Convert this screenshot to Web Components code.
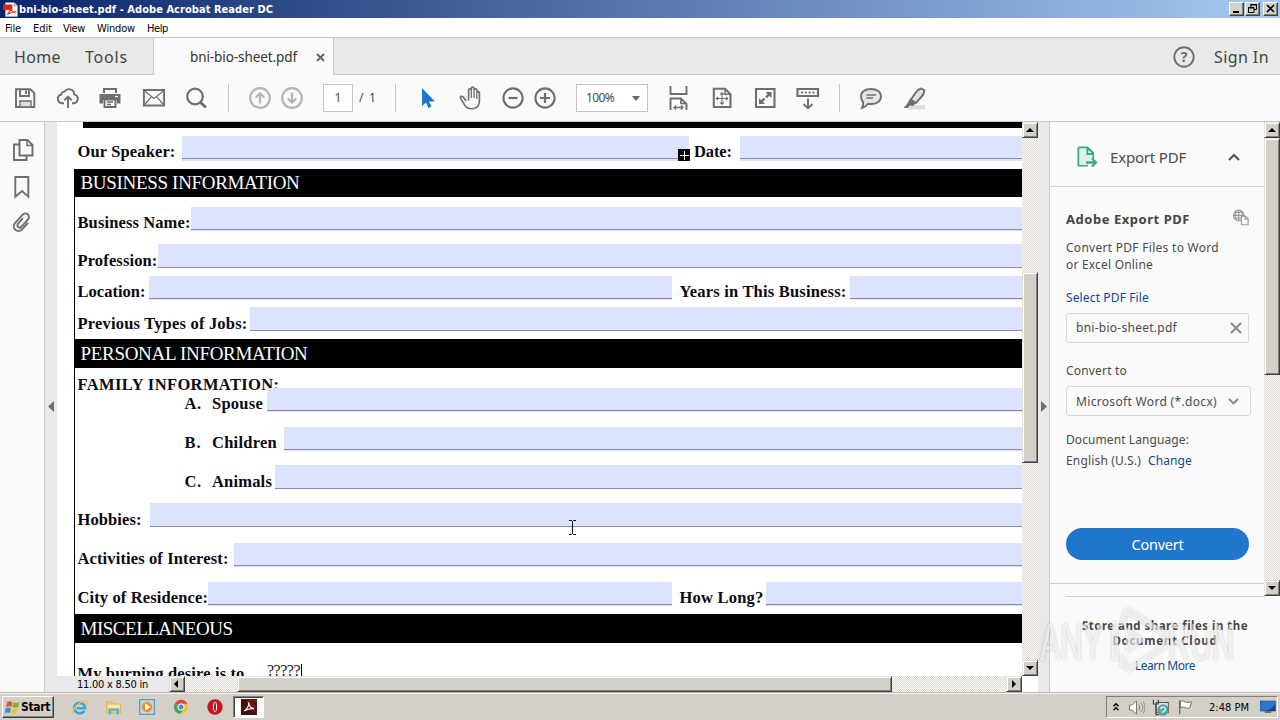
<!DOCTYPE html>
<html lang="en">
<head>
<meta charset="utf-8">
<title>bni-bio-sheet.pdf - Adobe Acrobat Reader DC</title>
<style>
html,body{margin:0;height:100%;overflow:hidden;background:#fafafa;font-family:"Noto Sans","Open Sans",sans-serif}
</style>
</head>
<body>
<reader-window></reader-window>
<script>
const define = (name, markup, setup) => customElements.define(name, class extends HTMLElement {
  connectedCallback() {
    if (this.shadowRoot) return;
    const root = this.attachShadow({ mode: 'open' });
    root.innerHTML = typeof markup === 'function' ? markup(this) : markup;
    if (setup) setup(this, root);
  }
});

/* A single line of text; "w" is the width that the line is tracked to. */
define('ui-text', `<style>:host{display:block;flex:none;white-space:nowrap;line-height:18px}span{display:inline-block}</style><span><slot></slot></span>`,
  (el, root) => {
    const w = +el.getAttribute('w');
    if (!w) return;
    const span = root.querySelector('span');
    const n = el.textContent.length;
    span.style.letterSpacing = ((w - span.getBoundingClientRect().width) / n).toFixed(3) + 'px';
    el.style.width = w + 'px';
  });

const page = '<path d="M4 2.9h10l6 6V21H4z"/><path d="M14 3v6h6"/>';
const ICONS = {
  save: '<path d="M3 3.200h14.300l4 4V21H3z"/><path d="M7 3.500V10h9V3.500"/><path d="M13 4.500v3.500" /><path d="M7 21v-6h11v6z" fill="#ddd" stroke-width="1.400"/>',
  cloud: '<path d="M8 17.200H6a4.400 4.400 0 0 1-.6-8.700 3 3 0 0 1 3.200-2.900 5.200 5.200 0 0 1 9.600 2.800 4.500 4.500 0 0 1 0 8.800H16"/><path d="M12 22V11M8.300 14.400 12 10.700l3.700 3.700"/>',
  print: '<path d="M6 7V3h12v4" stroke-width="2"/><path d="M1.500 8h21v9.500H19V14H5v3.500H1.500z" fill="currentColor" stroke="none"/><path d="M6.500 13.500h11V21h-11z" fill="#fafafa"/><path d="M9 16h6M9 18.500h4" stroke-width="1.300"/><path d="M17 10.500h3" stroke="#fafafa" stroke-width="1.200"/>',
  mail: '<path d="M1.900 4h20.200v15.500H1.900z"/><path d="m2 4.500 10 8 10-8M2 19l7.500-8.300M22 19l-7.500-8.300" stroke-width="1.200"/>',
  search: '<circle cx="11" cy="10.500" r="7.800" stroke-width="2.200"/><path d="m16.500 16.500 5.500 5" stroke-width="3"/>',
  up: '<circle cx="12" cy="12" r="9.800" stroke-width="2.200"/><path d="M12 17.500V7.500M7.800 11.500 12 7.300l4.200 4.200" stroke-width="2.200"/>',
  down: '<circle cx="12" cy="12" r="9.800" stroke-width="2.200"/><path d="M12 6.500v10M7.800 12.500l4.200 4.200 4.200-4.200" stroke-width="2.200"/>',
  arrow: '<path d="M7 2v18l4-3.500 2.500 5.500 3-1.500-2.500-5h6z" fill="#2076cc" stroke="none"/>',
  hand: '<path d="M8 15 4.800 11.300c-1.800-1.800-3.700-.300-2.600 1.400l4.600 7.500c1.500 2.700 3.700 3.300 7 3.300 5 0 8-2.500 8-8.500V7.200c0-2-2.600-2-2.600 0V4.300c0-2-2.900-2-2.900 0V2.500c0-2-2.900-2-2.900 0v1.600c0-2-2.900-2-2.900 0V15" stroke-width="1.700" transform="translate(.5 .2) scale(.96)"/><path d="M13.300 4v8M16 4v8M18.800 7v6" stroke-width="1.300"/>',
  minus: '<circle cx="12" cy="12" r="9.600" stroke-width="2.100"/><path d="M7.500 12h9" stroke-width="2.200"/>',
  plus: '<circle cx="12" cy="12" r="9.600" stroke-width="2.100"/><path d="M7 12h10M12 7v10" stroke-width="2.200"/>',
  fitwidth: '<path d="M4.500 0v8h16V0M4.500 24V12.500h10.500l5.500 5.500v6"/><path d="M15 12v5.500h5" stroke-width="1.700"/><path d="M8 21.500h9M10 19.500l-2 2 2 2M15 19.500l2 2-2 2" stroke-width="1.300"/>',
  fitpage: '<path d="M3.800 2.800H15l5.500 5.500V21H3.800z" stroke-width="2.100"/><path d="M15 3v5.300h5.200" stroke-width="1.500"/><path d="M12 7v11M6.500 12.500h11M10.300 8.500 12 6.800l1.700 1.700M10.300 16.500l1.700 1.700 1.700-1.700M8 10.800l-1.700 1.700L8 14.200M16 10.800l1.700 1.700-1.700 1.700" stroke-width="1.100"/>',
  full: '<path d="M3 3h18.500v18H3z" stroke-width="2.100"/><path d="M12.500 6h6v6zM6 12v6h6z" fill="currentColor" stroke="none"/><path d="m17 7.500-4 4M7.500 16.500l4-4" stroke-width="2.400"/>',
  keys: '<path d="M1.500 3h20.500v7H1.500z" stroke-width="2.200"/><path d="M5 6.500h14" stroke-dasharray="2 1.800" stroke-width="2"/><path d="M12 12.500V22M7.500 18l4.500 4.300 4.500-4.300"/>',
  comment: '<path d="M12 3c6 0 10 3 10 7.500S18 18 12 18c-1 0-2-.100-3-.300-1.500 2-3.500 3.800-6 4.300 1-2 1.500-3.500 1.200-5.800C2.500 14.800 2 12.800 2 10.500 2 6 6 3 12 3z" fill="#e6e6e6"/><path d="M7.500 9h9.500M7.500 12h6.500" stroke-width="1.300"/>',
  pen: '<path d="M10 19h13v4.500H5z" fill="#ddd" stroke="none"/><path d="M19 2.500 22.300 4c0 3-1 5-3 7l-5.500 6-5-3.500 5-7c1.500-2 3-3.300 5.200-4z" fill="#e3e3e3" stroke-width="1.900"/><path d="m7.500 13.500 6 4-2.500 2.500-3-.500-2 2.500H1.500l3.500-4z" fill="currentColor" stroke="none"/>',
  pages: '<path d="M8.500 2h8l5 5v10.500h-13z"/><path d="M16 2v5.500h5.500" stroke-width="1.500"/><path d="M8.500 6.500H3V22h12.500v-4"/>',
  bookmark: '<path d="M5.300 2h13v19.700L12 16l-6.700 5.700z"/>',
  clip: '<g transform="rotate(42 12 12)"><path d="M16.500 8v9a4.500 4.500 0 0 1-9.500 0V5.500a3.600 3.600 0 0 1 7.200 0V16a2.300 2.300 0 0 1-4.500 0V8" stroke-width="1.900" transform="translate(.5 .5)"/></g>',
  help: '<circle cx="12" cy="12" r="9.700"/>',
  exportpdf: '<g stroke="#3faa87" stroke-width="2.100" transform="translate(1 0)"><path d="M3.500 2.500h9L18 8v6M3.500 2.500v18H13" fill="none"/><path d="M4.500 3.500h8V9h5v5l-5 6h-8z" fill="#dcf1e8" stroke="none"/><path d="M12.500 3v6H18"/><path d="M11 17.500h9M17 13.500l4 4-4 4" stroke-width="2.300"/></g>',
  globe: '<g stroke="#999" stroke-width="1.500"><circle cx="9" cy="8.500" r="7"/><path d="M2 8.500h14M9 2v14M4 4.500h10M4 12h8M6 2.500c-2.500 4-2.500 8 0 12M12 2.500c2 3 2.500 5 2 8"/><path d="M12.500 9.500h5.500l3.500 3.500v8h-9z" fill="#fafafa"/><path d="M17.500 10v3.500H21"/></g>',
  acrobatdoc: '<path d="M4 1h14l5 5v17H4z" fill="#fff" stroke="#bbb" stroke-width="1"/><path d="M0 4h15v9H0z" fill="#d82a1e" stroke="none"/><path d="M18 1v5h5" stroke="#999" fill="#eee"/><path d="M7 20c4-4 5-8 5-10 1 5 5 7 9 6-5-.500-9 1-14 4z" stroke="#d93b2b"/>',
  ie: '<path d="M4 14a8 8 0 1 1 16-1H8M19 17a8 8 0 0 1-14-2" stroke="#38a5dc" stroke-width="3.600"/><path d="M3 21C-1 17 12 2 21 3c2.500.500 1 4 0 5" stroke="#e8c547" stroke-width="1.800"/>',
  folder: '<path d="M2 4h8l2 3h10v13H2z" fill="#e9ca62" stroke="#d5b24a" stroke-width="1"/><path d="M4 8h17v5H4z" fill="#f7e8a5" stroke="none"/><path d="M7 22v-7h11v7" stroke="#5cb3dc" stroke-width="3.500"/>',
  media: '<rect x="1" y="1" width="22" height="22" fill="#bcdcf0" stroke="#5197c5" stroke-width="1.800"/><circle cx="12" cy="12" r="8" fill="#f28c1d" stroke="#f7b35c" stroke-width="1"/><path d="m9 6.500 8.500 5.500L9 17.500z" fill="#fff" stroke="none"/>',
  chrome: '<circle cx="12" cy="12" r="10.500" fill="#f2c52d" stroke="none"/><path d="M12 12 3 6.500A10.500 10.500 0 0 1 21.500 7H12z" fill="#d94b3d" stroke="none"/><path d="M12 12 3 6.500A10.500 10.500 0 0 0 11 22.500l5-8z" fill="#43a45a" stroke="none"/><circle cx="12" cy="12" r="4.700" fill="#4c8edb" stroke="#fff" stroke-width="1.500"/>',
  opera: '<circle cx="12" cy="12" r="11.500" fill="#c5151e" stroke="none"/><ellipse cx="12" cy="12" rx="3.800" ry="8.500" fill="#f2f2f2" stroke="#8d0c12" stroke-width="1"/><ellipse cx="12" cy="12" rx="1.500" ry="7" fill="#a91820" stroke="none"/>',
  acrobat: '<rect width="24" height="24" fill="#4a0d0c" stroke="none"/><path d="M4 0h20v24z" fill="#7a1815" stroke="none" opacity=".6"/><path d="M5 18c4-3 7-8 6.500-13 .500 5 3 9 8 9.500-5-.500-10 .500-14.500 3.500z" stroke="#fff" stroke-width="1.800"/>',
  flagwin: '<path d="M3 5c3-2 5-2 8-.500L9.500 12C7 10.500 4.500 11 1.500 12z" fill="#e5542a" stroke="none"/><path d="M12.500 5c3 1.500 5 1.500 9 0L20 12c-3 1.500-6 1.500-9 .500z" fill="#77b52d" stroke="none"/><path d="M1 14c3-1.500 5.500-1.500 8-.200L7.500 21c-3-1.500-5-1-8 .200z" fill="#3d8bd4" stroke="none"/><path d="M10.500 14.300c3 1.300 6 1 9 0L18 21.500c-3 1.500-6 1.300-9 .200z" fill="#f6c427" stroke="none"/>',
  chevrons: '<path d="m6 10 6-6 6 6M6 20l6-6 6 6" stroke="#000" stroke-width="3.500"/>',
  speaker: '<path d="M2 8.500h4l6-6v19l-6-6H2z" fill="#fff" stroke="#777" stroke-width="1.400"/><path d="M15 8c2 2 2 6 0 8M18 5.500c4 4 4 9 0 13M21 3.500c4 5 4 12 0 17" stroke="#888" stroke-width="1.400"/>',
  network: '<path d="M6 5h17v14H6z" fill="#d8eaf0" stroke="#555" stroke-width="1.500"/><path d="M2 1v6h7V1M5.500 7v15H10" stroke="#444" stroke-width="1.600"/><circle cx="15.500" cy="15.500" r="7" fill="#47b5ae" stroke="#6c8d91"/><path d="M12 14c2-4 7-3 7 0s-5 5-5 5" stroke="#d5f1e8"/>',
  flag: '<path d="M4 2v21" stroke="#666" stroke-width="2"/><path d="M5 3.500c5-2 6 1 9 1.500l8-.500-3 9c-4 1-7-.500-9-1.500L5 13z" fill="#fff" stroke="#666" stroke-width="1.400"/>',
  monitor: '<path d="M0 3h23v15H0z" fill="#2e78d2" stroke="#254a7c" stroke-width="1"/><path d="M23 8v10H5C14 17 19 13 23 8z" fill="#153e94" stroke="none"/><path d="M7 18v3h10v-3" fill="#777" stroke="none"/>'
};
define('ui-icon', el => {
  const s = el.getAttribute('size') || 24;
  return `<style>:host{display:block;flex:none;width:${s}px;height:${s}px;color:#6e6e6e}svg{display:block}</style>
  <svg width="${s}" height="${s}" viewBox="0 0 24 24" fill="none" stroke="currentColor" stroke-width="1.900">${ICONS[el.getAttribute('name')] || page}</svg>`;
});

/* Classic raised scrollbar: "before" and "thumb" are lengths along its axis. */
define('win-scroll', el => {
  const v = !el.hasAttribute('horizontal');
  const a = el.getAttribute('before'), t = el.getAttribute('thumb');
  const tri = d => `<svg width="8" height="8" viewBox="0 0 8 8"><path d="${d}"/></svg>`;
  return `<style>
  :host{display:flex;flex-direction:${v ? 'column' : 'row'};flex:none;${v ? 'width' : 'height'}:16px;
    background:repeating-conic-gradient(#fbfaf9 0 25%,#dedbd5 0 50%) 0 0/2px 2px}
  .b,.t{box-sizing:border-box;background:#d4d0c8;border:1px solid;border-color:#e4e1dc #404040 #404040 #e4e1dc;box-shadow:inset 1px 1px #fff,inset -1px -1px #808080;flex:none}
  .b{width:16px;height:16px;display:grid;place-items:center}
  .t{${v ? `height:${t}px;margin-top:${a}px` : `width:${t}px;margin-left:${a}px`}}
  .g{flex:1}
  </style><div class="b">${tri(v ? 'M0 6 4 2l4 4z' : 'M5 0v8L1 4z')}</div><div class="t"></div><div class="g"></div><div class="b">${tri(v ? 'M0 2h8L4 6z' : 'M2 0v8l4-4z')}</div>`;
});

define('title-bar', `<style>
:host{display:flex;align-items:center;height:18px;flex:none;background:linear-gradient(90deg,#0a246a,#a6caf0);color:#fff;box-sizing:border-box;padding:0 2px 0 3px}
ui-text{font:bold 11px/18px "DejaVu Sans Condensed","DejaVu Sans",sans-serif;font-stretch:condensed;margin:1px 0 0 1px}
.s{flex:1}
.b{width:15px;height:14px;box-sizing:border-box;background:#d4d0c8;border:1px solid;border-color:#fff #404040 #404040 #fff;box-shadow:inset -1px -1px #808080}
.b+.b{margin-left:1px}.b.x{margin-left:3px}svg{display:block}
</style><ui-icon name="acrobatdoc" size="15"></ui-icon><ui-text w="254">bni-bio-sheet.pdf - Adobe Acrobat Reader DC</ui-text><div class="s"></div>
<div class="b"><svg width="13" height="12"><path d="M3 8h6v2H3z"/></svg></div>
<div class="b"><svg width="13" height="12" fill="none" stroke="#000"><path d="M5 4V1.500h5.500v5H8M4 2h7M2.500 4.500H8v5H2.500zM2 5h6"/></svg></div>
<div class="b x"><svg width="13" height="12" stroke="#000" stroke-width="1.700"><path d="m3 2 7 7M10 2 3 9"/></svg></div>`);

define('menu-bar', `<style>
:host{display:flex;height:19px;flex:none;background:#fff;padding-left:5px;border-bottom:1px solid #c4c4c4;color:#000}
ui-text{font:11px/21px "DejaVu Sans Condensed","DejaVu Sans",sans-serif;font-stretch:condensed;margin-right:12px}
</style><ui-text w="16">File</ui-text><ui-text w="19" style="margin-right:11px">Edit</ui-text><ui-text w="22">View</ui-text><ui-text w="38" style="margin-right:12px">Window</ui-text><ui-text w="21">Help</ui-text>`);

define('tab-bar', `<style>
:host{display:flex;height:37px;flex:none;color:#444}
.h,.r{background:#e9e9e9;border-bottom:1px solid #c8c8c8;box-sizing:border-box;display:flex;align-items:center}
.h{width:154px;border-right:1px solid #c8c8c8;padding:1px 0 0 14px;font-size:16px}
.t{width:179px;background:#fafafa;display:flex;align-items:center;font-size:13.500px;color:#333;padding:1px 0 0 36px;box-sizing:border-box}
.r{flex:1;border-left:1px solid #c8c8c8;justify-content:flex-end;padding:1px 11px 0 0;font-size:16px}
.q{display:grid;margin-right:18px}.q>*{grid-area:1/1}.q ui-text{font:bold 14px/24px "Noto Sans",sans-serif;text-align:center;color:#6e6e6e}
</style>
<div class="h"><ui-text w="47">Home</ui-text><ui-text w="43" style="margin-left:24px">Tools</ui-text></div>
<div class="t"><ui-text w="107">bni-bio-sheet.pdf</ui-text><svg width="9" height="9" style="margin-left:19px" stroke="#666" stroke-width="2"><path d="m1 1 7 7M8 1 1 8"/></svg></div>
<div class="r"><div class="q"><ui-icon name="help"></ui-icon><ui-text>?</ui-text></div><ui-text w="55">Sign In</ui-text></div>`);

define('tool-bar', () => {
  const i = (n, m, c = '') => `<ui-icon name="${n}" style="margin-left:${m}px;${c}"></ui-icon>`;
  const s = m => `<i style="margin-left:${m}px"></i>`;
  return `<style>
  :host{display:flex;align-items:center;height:46px;flex:none;background:#fafafa;border-bottom:1px solid #c8c8c8;color:#4a4a4a}
  i{width:1px;height:28px;background:#c8c8c8;flex:none}
  .f{box-sizing:border-box;height:28px;border:1px solid #c6c6c6;background:#fff;display:flex;align-items:center;flex:none}
  ui-text{font-size:12px}
  </style>
  ${i('save', 13)}${i('cloud', 19)}${i('print', 18)}${i('mail', 20)}${i('search', 18)}${s(20)}${i('up', 19, 'color:#b4b4b4')}${i('down', 8, 'color:#b4b4b4')}
  <div class="f" style="width:30px;margin-left:19px;justify-content:center"><ui-text>1</ui-text></div><ui-text w="18" style="margin-left:6px">/ 1</ui-text>
  ${s(18)}${i('arrow', 19)}${i('hand', 19)}${i('minus', 19)}${i('plus', 8)}
  <div class="f" style="width:72px;margin-left:19px;padding-left:9px"><ui-text w="28">100%</ui-text><svg width="8" height="5" style="margin-left:18px" fill="#666"><path d="M0 0h8L4 5z"/></svg></div>
  ${i('fitwidth', 18)}${i('fitpage', 20)}${i('full', 19)}${i('keys', 19)}${s(19)}${i('comment', 19)}${i('pen', 19)}`;
});

define('side-rail', `<style>
:host{display:flex;flex:none}
.i{width:44px;background:#fafafa;border-right:1px solid #c8c8c8;display:flex;flex-direction:column;align-items:center;padding-top:16px;gap:13px;box-sizing:content-box}
.c{width:12px;background:#e9e9e9;display:flex;align-items:center;justify-content:center}
</style><div class="i"><ui-icon name="pages" style="margin-left:2px"></ui-icon><ui-icon name="bookmark"></ui-icon><ui-icon name="clip" style="margin-top:-2px"></ui-icon></div>
<div class="c"><svg width="6" height="12" fill="#6e6e6e"><path d="M6 0v11L0 5.500z"/></svg></div>`);

define('section-bar', `<style>
:host{display:flex;align-items:center;background:#000;color:#fff;padding-left:5.500px;flex:none;font:19px "Liberation Serif",serif;box-sizing:border-box}
</style><slot></slot>`);

/* Fillable area: tinted box with the printed rule near its lower edge. */
define('form-field', el => `<style>
:host{display:flex;flex-direction:column;justify-content:flex-end;background:#dce3fd;flex:${el.hasAttribute('w') ? '0 0 ' + el.getAttribute('w') + 'px' : '1'};align-self:stretch}
hr{border:0;height:1px;width:100%;margin:0 0 ${el.getAttribute('drop') || 1}px;background:#8589b3}
</style><hr>`);

define('form-row', `<style>
:host{display:flex;flex:none;padding-left:2.500px;box-sizing:border-box}
::slotted(ui-text){margin-top:var(--label-top,6px)!important;line-height:20px!important}
</style><slot></slot>`);

define('pdf-page', () => {
  const row = (gap, h, body, top = 6) => `<form-row style="margin-top:${gap}px;height:${h}px;--label-top:${top}px">${body}</form-row>`;
  const lab = (txt, w, cell, ml = 0) => `<ui-text w="${w}" style="margin-left:${ml}px;margin-right:${cell - w - (ml < 10 ? .5 : 0)}px">${txt}</ui-text>`;
  return `<style>
  :host{display:block;position:relative;flex:1;min-width:0;overflow:hidden;background:#fff;color:#0a0a12;font:bold 16.500px "Liberation Serif",serif}
  .top{height:6px;background:#000;margin-left:26px}
  .sheet{margin-left:17px;display:flex;flex-direction:column;border-left:1px solid #000;margin-top:8px;height:600px}
  .first{margin-left:18px}
  .plus{position:absolute;left:621px;top:27px;width:12px;height:12px;background:#000}
  .beam{position:absolute;left:511px;top:398px}
  svg{display:block}
  .ans{font:16px/20px "Liberation Serif",serif;padding-right:1px;border-right:1px solid #000;height:14px;line-height:13px;color:#222}
  </style>
  <div class="top"></div>
  <div class="first">${row(8, 25, lab('Our Speaker:', 98, 105) + '<form-field w="507" drop="2"></form-field>' + lab('Date:', 38, 46, 5) + '<form-field drop="2"></form-field>')}</div>
  <div class="sheet">
  <section-bar style="height:28px"><ui-text w="219">BUSINESS INFORMATION</ui-text></section-bar>
  ${row(10, 24, lab('Business Name:', 113, 114) + '<form-field></form-field>')}
  ${row(13, 24, lab('Profession:', 80, 81) + '<form-field drop="0.5"></form-field>', 7)}
  ${row(8, 24, lab('Location:', 68, 72) + '<form-field w="523"></form-field>' + lab('Years in This Business:', 167, 171, 7.5) + '<form-field></form-field>')}
  ${row(7, 24, lab('Previous Types of Jobs:', 170, 173) + '<form-field drop="0.5"></form-field>', 7)}
  <section-bar style="height:29px;margin-top:8px"><ui-text w="227">PERSONAL INFORMATION</ui-text></section-bar>
  <form-row style="height:20px;--label-top:7px">${lab('FAMILY INFORMATION:', 202, 203)}</form-row>
  ${row(0, 24, lab('A.', 17, 27.5, 107) + lab('Spouse', 51, 55.5) + '<form-field></form-field>')}
  ${row(15, 24, lab('B.', 17, 27.5, 107) + lab('Children', 65, 72.5) + '<form-field></form-field>')}
  ${row(14, 24, lab('C.', 17, 27.5, 107) + lab('Animals', 60, 63.5) + '<form-field drop="0"></form-field>', 7)}
  ${row(14, 24, lab('Hobbies:', 64, 73) + '<form-field drop="0"></form-field>', 7)}
  ${row(16, 24, lab('Activities of Interest:', 151, 157) + '<form-field></form-field>')}
  ${row(15, 24, lab('City of Residence:', 130.5, 131) + '<form-field w="464"></form-field>' + lab('How Long?', 84, 87, 7.5) + '<form-field></form-field>')}
  <section-bar style="height:29px;margin-top:8px"><ui-text w="152">MISCELLANEOUS</ui-text></section-bar>
  ${row(15, 24, lab('My burning desire is to', 167, 190) + '<div class="ans" style="margin-top:6px"><ui-text w="33" style="line-height:13px">?????</ui-text></div>')}
  </div>
  <svg class="plus" viewBox="0 0 12 12" stroke="#fff"><path d="M2 6.500h9M6.500 2v9"/></svg>
  <svg class="beam" width="9" height="15" fill="none" stroke="#000"><path d="M1 .500h2.500l1 1 1-1H8M4.500 1v13M1 14.500h2.500l1-1 1 1H8"/></svg>`;
});

define('doc-view', `<style>
:host{display:flex;flex-direction:column;width:981px;flex:none}
.m{display:flex;flex:1;min-height:0}
.b{display:flex;height:16px;flex:none;background:#e9e9e9}
ui-text{font:11px/18px "DejaVu Sans Condensed","DejaVu Sans",sans-serif;font-stretch:condensed;color:#000;margin-left:20px}
</style><div class="m"><pdf-page></pdf-page><win-scroll before="134" thumb="191"></win-scroll></div>
<div class="b"><ui-text w="71">11.00 x 8.50 in</ui-text><win-scroll horizontal before="52" thumb="655" style="width:853px;margin-left:21px"></win-scroll><div style="flex:1;background:#fff"></div></div>`);

define('export-panel', `<style>
:host{display:flex;flex-direction:column;flex:1;min-width:0;background:#fafafa;border-left:1px solid #c8c8c8;color:#4a4a4a;font-size:12px;position:relative}
.m{display:flex;height:474px;flex:none}.p{flex:1;min-width:0;display:flex;flex-direction:column}
.hd{height:65px;display:flex;align-items:center;padding:6px 24px 0 24px;box-sizing:border-box;border-bottom:1px solid #d5d5d5;font-size:15px}
.bd{display:flex;flex-direction:column;padding:23px 13px 0 16px;height:373px;box-sizing:border-box}
.r{display:flex;align-items:center}
.f{box-sizing:border-box;border:1px solid #dadada;border-radius:3px;display:flex;align-items:center;justify-content:space-between;padding:0 6px 0 9px;width:183px;flex:none}
a{color:#0d4a8f;display:block}
button{margin:58px 0 0;border:0;border-radius:16px;background:#2076cc;height:32px;width:183px;color:#fff;font:14.500px "Noto Sans",sans-serif;padding:0 0 1px;display:flex;justify-content:center;align-items:center;flex:none}
.ln{height:1px;background:#d0d0d0;margin-top:23px}
.ft{display:flex;flex-direction:column;align-items:center;margin-top:21px;font-weight:bold;font-size:11.500px}
.ft ui-text{line-height:15px}
.wm{position:absolute;left:-13px;top:482px;filter:drop-shadow(0 0 1.500px rgba(0,0,0,.3))}
</style>
<div class="m"><div class="p">
<div class="hd"><ui-icon name="exportpdf"></ui-icon><ui-text w="76" style="margin-left:12px">Export PDF</ui-text><div style="flex:1"></div><svg width="12" height="8" fill="none" stroke="#555" stroke-width="2.200"><path d="m1 7 5-5 5 5"/></svg></div>
<div class="bd">
<div class="r" style="height:18px;width:184px;justify-content:space-between"><ui-text w="124" style="font-weight:bold;font-size:13px;color:#444">Adobe Export PDF</ui-text><ui-icon name="globe" size="18" style="margin-top:-2px"></ui-icon></div>
<ui-text w="153" style="margin-top:11px">Convert PDF Files to Word</ui-text><ui-text w="87" style="margin-top:-1px">or Excel Online</ui-text>
<a style="margin-top:15px"><ui-text w="83">Select PDF File</ui-text></a>
<div class="f" style="height:30px;margin-top:6px"><ui-text w="101">bni-bio-sheet.pdf</ui-text><svg width="12" height="12" stroke="#888" stroke-width="2"><path d="m1 1 10 10M11 1 1 11"/></svg></div>
<ui-text w="61" style="margin-top:19px">Convert to</ui-text>
<div class="f" style="height:30px;margin-top:6px;width:185px;padding:1px 11px 0 9px"><ui-text w="141">Microsoft Word (*.docx)</ui-text><svg width="11" height="7" fill="none" stroke="#888" stroke-width="1.900"><path d="m1 1 4.500 4.500L10 1"/></svg></div>
<ui-text w="123" style="margin-top:15px">Document Language:</ui-text>
<div class="r" style="margin-top:3px"><ui-text w="75">English (U.S.)</ui-text><a style="margin-left:7px"><ui-text w="44">Change</ui-text></a></div>
<button><ui-text w="52">Convert</ui-text></button>
</div><div class="ln"></div></div><win-scroll before="0" thumb="237"></win-scroll></div>
<div style="height:1px;background:#d0d0d0;margin:0 16px 0 16px"></div>
<div class="ft"><ui-text w="166">Store and share files in the</ui-text><ui-text w="105">Document Cloud</ui-text><a style="font:12px 'Noto Sans',sans-serif;margin-top:10px"><ui-text w="60">Learn More</ui-text></a></div>
<svg class="wm" width="204" height="74" viewBox="0 0 204 74" fill="#fff" fill-opacity=".6" font-family="Liberation Sans,Arial,sans-serif" font-size="51">
<text x="3" y="56" textLength="63" lengthAdjust="spacingAndGlyphs">ANY</text><text x="131" y="56" textLength="66" lengthAdjust="spacingAndGlyphs">RUN</text>
<path d="M75 18h6v38h-6zM87 6l5-2 40 25v13L92 68l-9-6V50l6 4v6l4 2 33-22v-8L93 12l-4 2v9l20 13-20 13V23l-6-3z"/></svg>`);

define('task-bar', `<style>
:host{display:flex;height:27px;flex:none;align-items:center;background:#d4d0c8;border-top:1px solid #f5f4f1;box-sizing:border-box;padding:0 2px;color:#000;font:11px "DejaVu Sans Condensed","DejaVu Sans",sans-serif;font-stretch:condensed}
.s,.a,.t{box-sizing:border-box;height:22px;display:flex;align-items:center;border:1px solid}
.s{width:52px;border-color:#fff #404040 #404040 #fff;box-shadow:inset -1px -1px #808080;padding-left:2px;font-weight:bold;font-size:12px}
.a{width:31px;border-color:#808080 #fff #fff #808080;background:#fff;box-shadow:inset 1px 1px #404040;justify-content:center;margin-left:10px}
.t{width:172px;border-color:#808080 #fff #fff #808080;padding-left:4px}
</style><div class="s"><ui-icon name="flagwin" size="16"></ui-icon><ui-text w="29">Start</ui-text></div>
<ui-icon name="ie" size="17" style="margin-left:17px"></ui-icon><ui-icon name="folder" size="17" style="margin-left:17px"></ui-icon><ui-icon name="media" size="16" style="margin-left:17px"></ui-icon><ui-icon name="chrome" size="16" style="margin-left:18px"></ui-icon><ui-icon name="opera" size="16" style="margin-left:18px"></ui-icon>
<div class="a"><ui-icon name="acrobat" size="16"></ui-icon></div><div style="flex:1"></div>
<div class="t"><ui-icon name="chevrons" size="10"></ui-icon><ui-icon name="speaker" size="17" style="margin-left:7px"></ui-icon><ui-icon name="network" size="17" style="margin-left:7px"></ui-icon><ui-icon name="flag" size="16" style="margin-left:8px"></ui-icon><ui-text w="40" style="margin:1px 0 0 16px">2:48 PM</ui-text><ui-icon name="monitor" size="16" style="margin-left:11px"></ui-icon></div>`);

define('reader-window', `<style>
:host{display:flex;flex-direction:column;width:1280px;height:720px;overflow:hidden}
.w{display:flex;flex:1;min-height:0;border-bottom:1px solid #bdbab4}
.c{width:11px;flex:none;background:#e9e9e9;display:flex;align-items:center;justify-content:flex-start;box-sizing:border-box}
</style><title-bar></title-bar><menu-bar></menu-bar><tab-bar></tab-bar><tool-bar></tool-bar>
<div class="w"><side-rail></side-rail><doc-view></doc-view><div class="c"><svg width="7" height="12" fill="#6e6e6e" style="margin-left:3px"><path d="M0 0v11l6-5.500z"/></svg></div><export-panel></export-panel></div>
<task-bar></task-bar>`);
</script>
</body>
</html>
